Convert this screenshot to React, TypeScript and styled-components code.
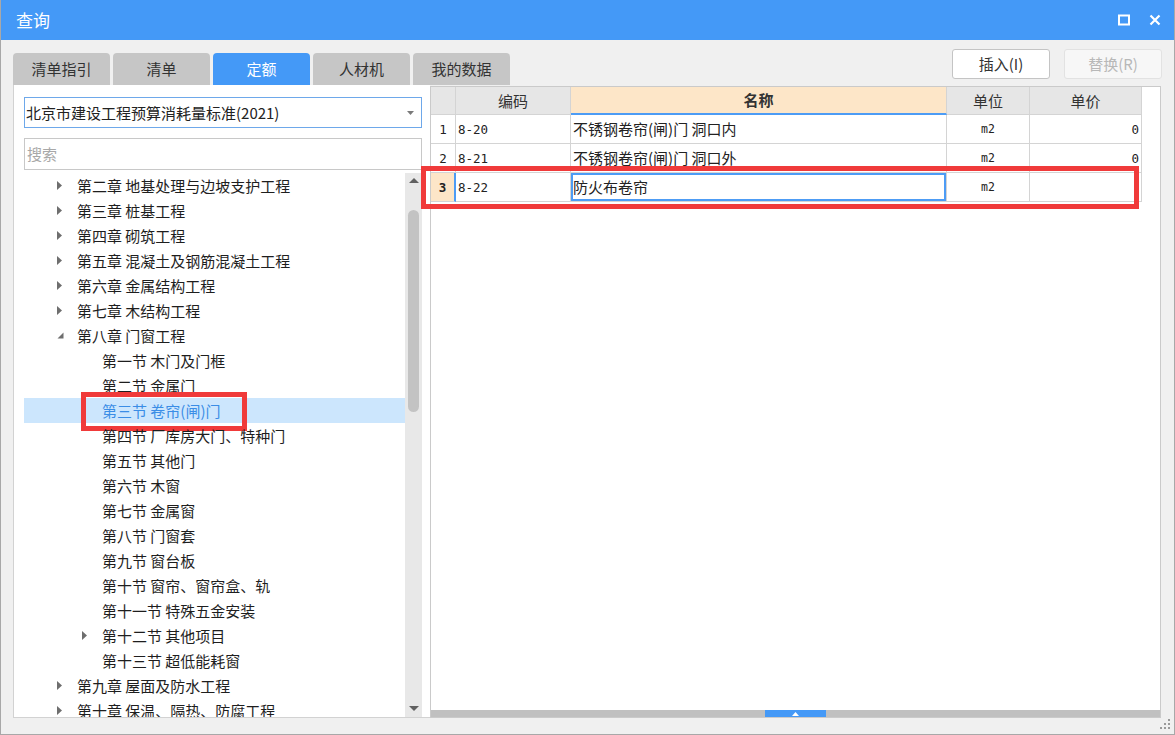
import styled, { createGlobalStyle } from 'styled-components';

interface TreeItem {
  label: string;
  level: number;
  toggle?: 'closed' | 'open';
  selected?: boolean;
}

interface GridRow {
  no: string;
  code: string;
  name: string;
  unit: string;
  price: string;
  current?: boolean;
}

const tabs = ['清单指引', '清单', '定额', '人材机', '我的数据'];

const treeItems: TreeItem[] = [
  { label: '第二章 地基处理与边坡支护工程', level: 0, toggle: 'closed' },
  { label: '第三章 桩基工程', level: 0, toggle: 'closed' },
  { label: '第四章 砌筑工程', level: 0, toggle: 'closed' },
  { label: '第五章 混凝土及钢筋混凝土工程', level: 0, toggle: 'closed' },
  { label: '第六章 金属结构工程', level: 0, toggle: 'closed' },
  { label: '第七章 木结构工程', level: 0, toggle: 'closed' },
  { label: '第八章 门窗工程', level: 0, toggle: 'open' },
  { label: '第一节 木门及门框', level: 1 },
  { label: '第二节 金属门', level: 1 },
  { label: '第三节 卷帘(闸)门', level: 1, selected: true },
  { label: '第四节 厂库房大门、特种门', level: 1 },
  { label: '第五节 其他门', level: 1 },
  { label: '第六节 木窗', level: 1 },
  { label: '第七节 金属窗', level: 1 },
  { label: '第八节 门窗套', level: 1 },
  { label: '第九节 窗台板', level: 1 },
  { label: '第十节 窗帘、窗帘盒、轨', level: 1 },
  { label: '第十一节 特殊五金安装', level: 1 },
  { label: '第十二节 其他项目', level: 1, toggle: 'closed' },
  { label: '第十三节 超低能耗窗', level: 1 },
  { label: '第九章 屋面及防水工程', level: 0, toggle: 'closed' },
  { label: '第十章 保温、隔热、防腐工程', level: 0, toggle: 'closed' },
];

const rows: GridRow[] = [
  { no: '1', code: '8-20', name: '不锈钢卷帘(闸)门 洞口内', unit: 'm2', price: '0' },
  { no: '2', code: '8-21', name: '不锈钢卷帘(闸)门 洞口外', unit: 'm2', price: '0' },
  { no: '3', code: '8-22', name: '防火布卷帘', unit: 'm2', price: '', current: true },
];

function App() {
  return (
    <>
      <GlobalStyle />
      <Window>
        <TitleBar>
          <TitleText>查询</TitleText>
          <TitleIcons>
            <svg width="12" height="12" viewBox="0 0 12 12">
              <rect x="1" y="1.5" width="10" height="9" fill="none" stroke="#fff" strokeWidth="2" />
            </svg>
            <svg width="12" height="12" viewBox="0 0 12 12">
              <path d="M1.5 1.5 L10.5 10.5 M10.5 1.5 L1.5 10.5" stroke="#fff" strokeWidth="2.2" />
            </svg>
          </TitleIcons>
        </TitleBar>

        <Body>
          <TopRow>
            <Tabs>
              {tabs.map((t) => (
                <Tab key={t} $active={t === '定额'}>
                  {t}
                </Tab>
              ))}
            </Tabs>
            <Buttons>
              <ActionButton>插入(I)</ActionButton>
              <ActionButton $disabled>替换(R)</ActionButton>
            </Buttons>
          </TopRow>

          <Content>
            <LeftPanel>
              <SelectBox>
                <span>北京市建设工程预算消耗量标准(2021)</span>
                <svg width="7" height="4" viewBox="0 0 7 4">
                  <path d="M0 0 H7 L3.5 4 Z" fill="#7a7a7a" />
                </svg>
              </SelectBox>
              <SearchBox>搜索</SearchBox>
              <TreeArea>
                <TreeList>
                  {treeItems.map((item) => (
                    <TreeRow key={item.label} $level={item.level} $selected={item.selected}>
                      <Toggle>
                        {item.toggle === 'closed' && (
                          <svg width="6" height="9" viewBox="0 0 6 9">
                            <path d="M0 0 L5 4.5 L0 9 Z" fill="#6e6e6e" />
                          </svg>
                        )}
                        {item.toggle === 'open' && (
                          <svg width="7" height="7" viewBox="0 0 7 7">
                            <path d="M6.5 0.5 V6.5 H0.5 Z" fill="#6e6e6e" />
                          </svg>
                        )}
                      </Toggle>
                      <TreeLabel $selected={item.selected}>{item.label}</TreeLabel>
                      {item.selected && <TreeMark />}
                    </TreeRow>
                  ))}
                </TreeList>
                <VScroll>
                  <svg width="10" height="5" viewBox="0 0 10 5">
                    <path d="M0 5 L5 0 L10 5 Z" fill="#606060" />
                  </svg>
                  <VThumb />
                  <svg width="10" height="5" viewBox="0 0 10 5">
                    <path d="M0 0 L5 5 L10 0 Z" fill="#606060" />
                  </svg>
                </VScroll>
              </TreeArea>
            </LeftPanel>

            <RightPanel>
              <GridArea>
                <GridLine $header>
                  <HeadCell />
                  <HeadCell>编码</HeadCell>
                  <HeadCell $accent>名称</HeadCell>
                  <HeadCell>单位</HeadCell>
                  <HeadCell>单价</HeadCell>
                </GridLine>
                {rows.map((r) => (
                  <GridLine key={r.no}>
                    <NoCell $current={r.current}>{r.no}</NoCell>
                    <CodeCell>{r.code}</CodeCell>
                    <NameCell $current={r.current}>{r.name}</NameCell>
                    <UnitCell>{r.unit}</UnitCell>
                    <PriceCell>{r.price}</PriceCell>
                    {r.current && <RowMark />}
                  </GridLine>
                ))}
              </GridArea>
              <HScroll>
                <HThumb>
                  <svg width="7" height="4" viewBox="0 0 7 4">
                    <path d="M0 4 L3.5 0 L7 4 Z" fill="#fff" />
                  </svg>
                </HThumb>
              </HScroll>
            </RightPanel>
          </Content>

          <BottomStrip>
            <svg width="11" height="11" viewBox="0 0 11 11">
              <g fill="#9a9a9a">
                <rect x="8" y="0" width="2" height="2" />
                <rect x="4" y="4" width="2" height="2" />
                <rect x="8" y="4" width="2" height="2" />
                <rect x="0" y="8" width="2" height="2" />
                <rect x="4" y="8" width="2" height="2" />
                <rect x="8" y="8" width="2" height="2" />
              </g>
            </svg>
          </BottomStrip>
        </Body>
      </Window>
    </>
  );
}

export default App;

const GlobalStyle = createGlobalStyle`
  html, body {
    margin: 0;
    padding: 0;
    background: #ffffff;
  }
  body {
    font-family: "Noto Sans CJK SC", "Noto Sans", sans-serif;
  }
  * {
    box-sizing: border-box;
  }
`;

const Window = styled.div`
  width: 1175px;
  height: 735px;
  display: flex;
  flex-direction: column;
  border: 1px solid #a8a8a8;
  border-top: none;
  background: #f0f0f0;
  overflow: hidden;
`;

const TitleBar = styled.div`
  height: 40px;
  flex-shrink: 0;
  display: flex;
  align-items: center;
  justify-content: space-between;
  padding: 0 13px 0 15px;
  background: #4499f7;
`;

const TitleText = styled.div`
  color: #ffffff;
  font-size: 17px;
  line-height: 22px;
`;

const TitleIcons = styled.div`
  display: flex;
  align-items: center;
  gap: 19px;
`;

const Body = styled.div`
  flex: 1;
  display: flex;
  flex-direction: column;
`;

const TopRow = styled.div`
  height: 45px;
  display: flex;
  justify-content: space-between;
  align-items: flex-end;
  padding: 0 12px 0 12px;
`;

const Tabs = styled.div`
  display: flex;
  gap: 3px;
`;

const Tab = styled.div<{ $active?: boolean }>`
  width: 97px;
  height: 32px;
  display: flex;
  align-items: center;
  justify-content: center;
  border-radius: 4px 4px 0 0;
  font-size: 15px;
  line-height: 20px;
  background: ${(p) => (p.$active ? '#4499f7' : '#c6c6c6')};
  color: ${(p) => (p.$active ? '#ffffff' : '#333333')};
`;

const Buttons = styled.div`
  align-self: flex-start;
  margin-top: 9px;
  display: flex;
  gap: 14px;
`;

const ActionButton = styled.div<{ $disabled?: boolean }>`
  width: 98px;
  height: 30px;
  display: flex;
  align-items: center;
  justify-content: center;
  border-radius: 3px;
  font-size: 15px;
  line-height: 20px;
  background: ${(p) => (p.$disabled ? '#f7f7f7' : '#ffffff')};
  border: 1px solid ${(p) => (p.$disabled ? '#e2e2e2' : '#c4c4c4')};
  color: ${(p) => (p.$disabled ? '#b8b8b8' : '#333333')};
`;

const Content = styled.div`
  height: 633px;
  display: flex;
  padding: 0 13px 0 12px;
`;

const LeftPanel = styled.div`
  width: 417px;
  flex-shrink: 0;
  display: flex;
  flex-direction: column;
  background: #ffffff;
  border-left: 1px solid #d2d2d2;
  border-bottom: 1px solid #d2d2d2;
  padding: 12px 8px 0 10px;
`;

const SelectBox = styled.div`
  height: 31px;
  flex-shrink: 0;
  display: flex;
  align-items: center;
  justify-content: space-between;
  padding: 0 7px 0 1px;
  border: 1px solid #6ea8ea;
  font-size: 15px;
  line-height: 20px;
  color: #222222;
`;

const SearchBox = styled.div`
  height: 32px;
  flex-shrink: 0;
  margin-top: 10px;
  display: flex;
  align-items: center;
  padding-left: 2px;
  border: 1px solid #c8c8c8;
  font-size: 15px;
  line-height: 20px;
  color: #a8a8a8;
`;

const TreeArea = styled.div`
  flex: 1;
  min-height: 0;
  margin-top: 3px;
  display: flex;
  overflow: hidden;
`;

const TreeList = styled.div`
  flex: 1;
  overflow: hidden;
`;

const TreeRow = styled.div<{ $level: number; $selected?: boolean }>`
  position: relative;
  height: 25px;
  display: flex;
  align-items: center;
  padding-left: ${(p) => 28 + p.$level * 25}px;
  background: ${(p) => (p.$selected ? '#cce6fd' : 'transparent')};
`;

const Toggle = styled.div`
  width: 25px;
  flex-shrink: 0;
  display: flex;
  align-items: center;
  padding-left: 5px;
`;

const TreeLabel = styled.span<{ $selected?: boolean }>`
  font-size: 15px;
  line-height: 20px;
  white-space: nowrap;
  color: ${(p) => (p.$selected ? '#3a8de6' : '#1e1e1e')};
`;

const TreeMark = styled.div`
  position: absolute;
  left: 57px;
  top: -6px;
  width: 166px;
  height: 39px;
  border: 5px solid #f03a3a;
`;

const VScroll = styled.div`
  width: 17px;
  flex-shrink: 0;
  display: flex;
  flex-direction: column;
  align-items: center;
  padding: 5px 0 6px;
  background: #e8e8e8;
`;

const VThumb = styled.div`
  width: 11px;
  height: 202px;
  margin: 27px 0 auto;
  border-radius: 6px;
  background: #c3c3c3;
`;

const RightPanel = styled.div`
  flex: 1;
  margin-top: 1px;
  display: flex;
  flex-direction: column;
  background: #ffffff;
  border: 1px solid #cacaca;
`;

const GridArea = styled.div`
  flex: 1;
`;

const GridLine = styled.div<{ $header?: boolean }>`
  position: relative;
  display: grid;
  grid-template-columns: 25px 115px 376px 83px 112px;
  height: ${(p) => (p.$header ? 28 : 29)}px;
`;

const Cell = styled.div`
  display: flex;
  align-items: center;
  border-right: 1px solid #d4d4d4;
  border-bottom: 1px solid #d4d4d4;
  overflow: hidden;
  white-space: nowrap;
  color: #222222;
`;

const HeadCell = styled(Cell)<{ $accent?: boolean }>`
  justify-content: center;
  font-size: 15px;
  line-height: 20px;
  color: #333333;
  font-weight: ${(p) => (p.$accent ? 700 : 400)};
  background: ${(p) => (p.$accent ? '#fde6c8' : '#e6e6e6')};
  border-bottom: ${(p) => (p.$accent ? '2px solid #4d9cf5' : '1px solid #d4d4d4')};
`;

const NoCell = styled(Cell)<{ $current?: boolean }>`
  justify-content: center;
  font-family: "DejaVu Sans Mono", monospace;
  font-size: 12.5px;
  font-weight: ${(p) => (p.$current ? 700 : 400)};
  background: ${(p) => (p.$current ? '#fde6c8' : '#ffffff')};
  border-right: ${(p) => (p.$current ? '2px solid #4d9cf5' : '1px solid #d4d4d4')};
`;

const CodeCell = styled(Cell)`
  padding-left: 2px;
  font-family: "DejaVu Sans Mono", monospace;
  font-size: 12.5px;
`;

const NameCell = styled(Cell)<{ $current?: boolean }>`
  padding-left: 2px;
  font-size: 15px;
  line-height: 20px;
  box-shadow: ${(p) => (p.$current ? 'inset 0 0 0 2px #4d9cf5' : 'none')};
`;

const UnitCell = styled(Cell)`
  justify-content: center;
  font-family: "DejaVu Sans Mono", monospace;
  font-size: 11.5px;
`;

const PriceCell = styled(Cell)`
  justify-content: flex-end;
  padding-right: 2px;
  font-family: "DejaVu Sans Mono", monospace;
  font-size: 12.5px;
`;

const RowMark = styled.div`
  position: absolute;
  left: -10px;
  top: -7px;
  width: 718px;
  height: 43px;
  border: 5px solid #f03a3a;
  z-index: 2;
`;

const HScroll = styled.div`
  height: 7px;
  flex-shrink: 0;
  display: flex;
  justify-content: center;
  background: #c0c0c0;
`;

const HThumb = styled.div`
  width: 61px;
  display: flex;
  align-items: center;
  justify-content: center;
  background: #4499f7;
`;

const BottomStrip = styled.div`
  flex: 1;
  display: flex;
  justify-content: flex-end;
  align-items: flex-start;
  padding: 1px 3px 0 0;
`;
